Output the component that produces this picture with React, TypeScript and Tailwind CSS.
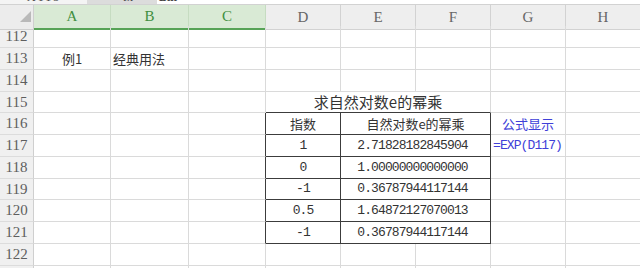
import type { ReactNode } from 'react';

const COLS = 'grid grid-cols-[34px_77px_78px_77px_75px_75px_75px_75px_75px]';
const CJK = "font-['Noto_Sans_CJK_SC',sans-serif]";
const MONO = "font-['Liberation_Mono','Noto_Sans_CJK_SC',monospace]";
const SERIF = "font-['Liberation_Serif',serif]";

function Cell({ className = '', children }: { className?: string; children?: ReactNode }) {
  return (
    <div
      className={`flex items-center overflow-hidden whitespace-nowrap border-r border-b border-[#dadada] ${className}`}
    >
      {children}
    </div>
  );
}

function RowHead({ n }: { n: number }) {
  return (
    <Cell className={`justify-center bg-[#f0f0f0] border-r-[#cfcfcf] border-b-[#dcdcdc] text-[15px] text-[#5e5e5e] tracking-normal ${SERIF}`}>
      {n}
    </Cell>
  );
}

const values = [
  { x: '1', y: '2.71828182845904' },
  { x: '0', y: '1.00000000000000' },
  { x: '-1', y: '0.36787944117144' },
  { x: '0.5', y: '1.64872127070013' },
  { x: '-1', y: '0.36787944117144' },
];

export default function App() {
  return (
    <div className="w-[640px] h-[268px] overflow-hidden bg-white text-[#333]">
      {/* formula bar remnant */}
      <div className="flex h-[5px] border-b border-[#d2d2d2] overflow-hidden text-[12px] leading-none text-[#444]">
        <div className="w-[87px] bg-[#f4f4f4] pl-[27px]">
          <span className={`block -mt-[9px] tracking-[2px] ${SERIF}`}>A113</span>
        </div>
        <div className="w-[70px] bg-[#dcdcdc] pl-[36px]">
          <span className={`block -mt-[9px] ${SERIF}`}>fx</span>
        </div>
        <div className="flex-1 pl-[2px]">
          <span className={`block -mt-[9px] font-bold ${SERIF}`}>Bill</span>
        </div>
      </div>

      {/* column headers */}
      <div className={`${COLS} h-[21px] text-[15px] ${SERIF}`}>
        <div className="relative bg-[#ececec] border-r border-b border-[#cfcfcf]">
          <svg className="absolute left-[20px] top-[6px]" width="11" height="11" viewBox="0 0 11 11">
            <polygon points="11,0 11,11 0,11" fill="#b9b9b9" />
          </svg>
        </div>
        {['A', 'B', 'C'].map((c) => (
          <div
            key={c}
            className="flex items-center justify-center bg-[#d9ead5] border-r border-[#c6dcc1] border-b-2 border-b-[#57a357] text-[#3f8f3f]"
          >
            {c}
          </div>
        ))}
        {['D', 'E', 'F', 'G', 'H'].map((c) => (
          <div
            key={c}
            className="flex items-center justify-center bg-[#eeeeee] border-r border-b border-[#d2d2d2] text-[#666]"
          >
            {c}
          </div>
        ))}
      </div>

      {/* 112 */}
      <div className={`${COLS} h-[22px]`}>
        <RowHead n={112} />
        <Cell /><Cell /><Cell /><Cell /><Cell /><Cell /><Cell /><Cell />
      </div>

      {/* 113 */}
      <div className={`${COLS} h-[22px] text-[13px] ${CJK}`}>
        <RowHead n={113} />
        <Cell className="justify-center">例1</Cell>
        <Cell className="pl-[2px]">经典用法</Cell>
        <Cell /><Cell /><Cell /><Cell /><Cell /><Cell />
      </div>

      {/* 114 */}
      <div className={`${COLS} h-[22px]`}>
        <RowHead n={114} />
        <Cell /><Cell /><Cell /><Cell /><Cell /><Cell /><Cell /><Cell />
      </div>

      {/* 115 title */}
      <div className={`${COLS} h-[21px]`}>
        <RowHead n={115} />
        <Cell /><Cell /><Cell />
        <Cell className={`col-span-3 justify-center border-b-[#3c3c3c] text-[15px] ${CJK}`}>
          求自然对数e的幂乘
        </Cell>
        <Cell /><Cell />
      </div>

      {/* 116 header */}
      <div className={`${COLS} h-[22px] text-[13px] ${CJK}`}>
        <RowHead n={116} />
        <Cell /><Cell />
        <Cell className="border-r-[#3c3c3c]" />
        <Cell className="justify-center border-r-[#3c3c3c] border-b-[#3c3c3c]">指数</Cell>
        <Cell className="col-span-2 justify-center border-r-[#3c3c3c] border-b-[#3c3c3c]">
          自然对数e的幂乘
        </Cell>
        <Cell className="justify-center text-[#4040d8]">公式显示</Cell>
        <Cell />
      </div>

      {values.map((v, i) => (
        <div key={i} className={`${COLS} ${i === 2 ? 'h-[21px]' : 'h-[22px]'} text-[13px] tracking-[-0.9px] ${MONO}`}>
          <RowHead n={117 + i} />
          <Cell /><Cell />
          <Cell className="border-r-[#3c3c3c]" />
          <Cell className="justify-center border-r-[#3c3c3c] border-b-[#3c3c3c]">{v.x}</Cell>
          <Cell className="col-span-2 justify-center pr-[6px] border-r-[#3c3c3c] border-b-[#3c3c3c]">
            {v.y}
          </Cell>
          <Cell className="pl-[2px] text-[#4040d8]">{i === 0 ? '=EXP(D117)' : ''}</Cell>
          <Cell />
        </div>
      ))}

      {/* 122 */}
      <div className={`${COLS} h-[22px]`}>
        <RowHead n={122} />
        <Cell /><Cell /><Cell /><Cell /><Cell /><Cell /><Cell /><Cell />
      </div>

      <div className={`${COLS} h-[22px]`}>
        <RowHead n={123} />
        <Cell /><Cell /><Cell /><Cell /><Cell /><Cell /><Cell /><Cell />
      </div>
    </div>
  );
}
